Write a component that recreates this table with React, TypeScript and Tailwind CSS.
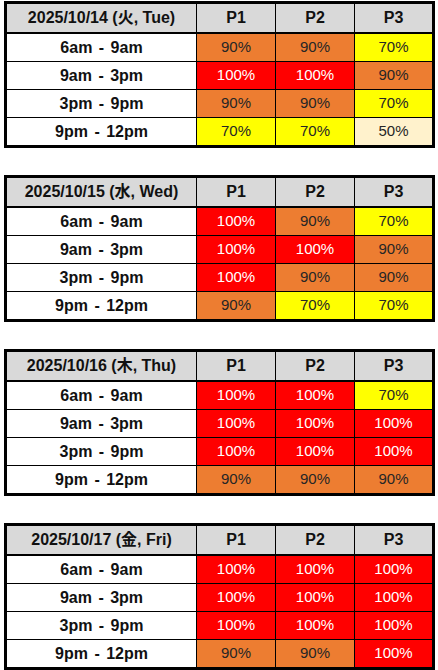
import React from "react";

type Day = { date: string; rows: number[][] };

const slots = ["6am - 9am", "9am - 3pm", "3pm - 9pm", "9pm - 12pm"];

const days: Day[] = [
  { date: "2025/10/14 (火, Tue)", rows: [[90, 90, 70], [100, 100, 90], [90, 90, 70], [70, 70, 50]] },
  { date: "2025/10/15 (水, Wed)", rows: [[100, 90, 70], [100, 100, 90], [100, 90, 90], [90, 70, 70]] },
  { date: "2025/10/16 (木, Thu)", rows: [[100, 100, 70], [100, 100, 100], [100, 100, 100], [90, 90, 90]] },
  { date: "2025/10/17 (金, Fri)", rows: [[100, 100, 100], [100, 100, 100], [100, 100, 100], [90, 90, 100]] },
];

function cellClass(v: number) {
  if (v === 100) return "bg-[#ff0000] text-white";
  if (v === 90) return "bg-[#ed7d31] text-[#262626]";
  if (v === 70) return "bg-[#ffff00] text-[#262626]";
  return "bg-[#fff2cc] text-[#262626]";
}

const widths = ["w-[79px]", "w-[79px]", "w-[78px]"];

function Table({ day }: { day: Day }) {
  return (
    <div className="w-[431px] border-[3px] border-black">
      <div className="flex h-[30px] border-b-2 border-black bg-[#d9d9d9] font-bold text-[16px] text-[#111]">
        <div className="w-[189px] flex items-center justify-center">{day.date}</div>
        {["P1", "P2", "P3"].map((p, i) => (
          <div key={p} className={`${widths[i]} border-l border-black flex items-center justify-center`}>
            {p}
          </div>
        ))}
      </div>
      {day.rows.map((r, ri) => (
        <div key={ri} className={`flex ${ri < 3 ? "h-[28px] border-b border-black" : "h-[27px]"}`}>
          <div className="w-[189px] bg-white flex items-center justify-center font-bold text-[16px] text-[#111] [word-spacing:2px]">
            {slots[ri]}
          </div>
          {r.map((v, ci) => (
            <div
              key={ci}
              className={`${widths[ci]} border-l border-black flex items-center justify-center text-[15px] ${cellClass(v)}`}
            >
              {v}%
            </div>
          ))}
        </div>
      ))}
    </div>
  );
}

export default function App() {
  return (
    <div
      className="w-[438px] h-[670px] bg-white pl-[4px] pt-[1px] flex flex-col gap-[27px]"
      style={{ fontFamily: '"Liberation Sans", "Noto Sans CJK JP", sans-serif' }}
    >
      {days.map((d) => (
        <Table key={d.date} day={d} />
      ))}
    </div>
  );
}
